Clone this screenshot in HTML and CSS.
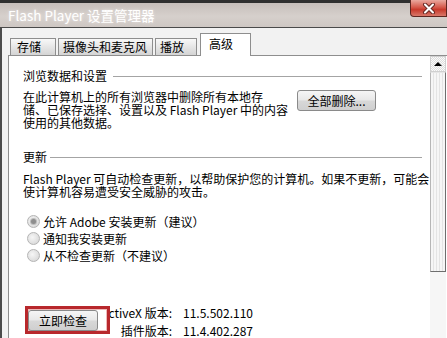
FILE: index.html
```html
<!DOCTYPE html>
<html lang="zh-CN">
<head>
  <meta charset="UTF-8">
  <title>Flash Player 设置管理器</title>
  <link rel="stylesheet" href="styles.css">
</head>
<body>

  <!-- Title bar -->
  <div class="titlebar">
    <span class="title">Flash Player 设置管理器</span>
    <span class="close">
      <svg width="14" height="11" viewBox="0 0 14 11">
        <path d="M3 1.5 L11 9.5 M11 1.5 L3 9.5" stroke="#6a2a24" stroke-width="4" stroke-linecap="round"/>
        <path d="M3 1.5 L11 9.5 M11 1.5 L3 9.5" stroke="#fff" stroke-width="2" stroke-linecap="round"/>
      </svg>
    </span>
  </div>

  <div class="frame">
    <!-- Tabs -->
    <div class="tabs">
      <div class="tab tab-storage">存储</div>
      <div class="tab tab-camera">摄像头和麦克风</div>
      <div class="tab tab-play">播放</div>
      <div class="tab tab-advanced active">高级</div>
    </div>

    <!-- Advanced panel -->
    <div class="panel">
      <div class="content">
        <div class="group-title">浏览数据和设置</div>
        <div class="row">
          <p class="desc desc-delete">在此计算机上的所有浏览器中删除所有本地存<br>储、已保存选择、设置以及 Flash Player 中的内容<br>使用的其他数据。</p>
          <button class="btn btn-delete">全部删除...</button>
        </div>

        <div class="group-title group-update">更新</div>
        <p class="desc desc-update">Flash Player 可自动检查更新，以帮助保护您的计算机。如果不更新，可能会<br>使计算机容易遭受安全威胁的攻击。</p>

        <div class="radios">
          <div class="option"><span class="radio checked"></span>允许 Adobe 安装更新（建议）</div>
          <div class="option"><span class="radio"></span>通知我安装更新</div>
          <div class="option"><span class="radio"></span>从不检查更新（不建议）</div>
        </div>

        <div class="bottom">
          <button class="btn btn-check">立即检查</button>
          <span class="mark"></span>
          <div class="versions">
            <span class="label">ActiveX 版本:</span><span>11.5.502.110</span>
            <span class="label">插件版本:</span><span>11.4.402.287</span>
          </div>
        </div>
      </div>

      <!-- Scrollbar -->
      <div class="scrollbar">
        <div class="sb-up"></div>
        <div class="sb-thumb"></div>
      </div>
    </div>
  </div>

</body>
</html>
```

FILE: styles.css
```css
body {
  margin: 0;
  width: 447px;
  height: 338px;
  overflow: hidden;
  background-color: #f2f2f2;
  font-family: "Noto Sans CJK SC", sans-serif;
  font-size: 12px;
  color: #000;
}
.titlebar {
  display: flex;
  align-items: flex-start;
  height: 24px;
  border-top: 3px solid #2f2f2f;
  border-bottom: 1px solid #4a4a4a;
  background: linear-gradient(to bottom, #c6beba, #d6d0cc 55%, #cec7c3);
}
.title {
  padding-left: 8px;
  line-height: 24px;
  font-size: 13.5px;
  color: #fff;
  text-shadow: 0 0 3px #ece8e6;
}
.close {
  margin-left: auto;
  margin-top: -3px;
  width: 37px;
  height: 17px;
  display: flex;
  align-items: center;
  justify-content: center;
  box-sizing: border-box;
  border: 1px solid #5e2620;
  border-top: none;
  border-radius: 0 0 0 4px;
  background: linear-gradient(to bottom, #eaa89e, #d65a4c 45%, #c83a2c 60%, #d9786a);
}
.frame {
  border-left: 2px solid #4c4c4c;
  height: 310px;
}
.tabs {
  display: flex;
  align-items: flex-end;
  height: 27px;
  padding-left: 8px;
}
.tab {
  position: relative;
  box-sizing: border-box;
  height: 17px;
  margin-right: 2px;
  border: 1px solid #8e8e8e;
  border-bottom: none;
  line-height: 16px;
  background: linear-gradient(to bottom, #f8f8f8, #e2e2e2 60%, #d4d4d4);
}
.tab-storage { width: 46px; padding-left: 6px; }
.tab-camera { width: 95px; padding-left: 4px; }
.tab-play { width: 42px; padding-left: 4px; margin-right: 3px; }
.tab-advanced { width: 51px; padding-left: 8px; }
.tab.active {
  height: 23px;
  margin-bottom: -1px;
  padding-top: 2px;
  background: #fff;
  z-index: 1;
}
.panel {
  display: flex;
  height: 282px;
  margin-left: 6px;
  border-top: 1px solid #8e8e8e;
  border-left: 1px solid #8e8e8e;
  background-color: #fff;
}
.content {
  width: 421px;
  box-sizing: border-box;
  padding: 13px 8px 0 14px;
}
.group-title {
  display: flex;
  align-items: center;
  line-height: 14px;
}
.group-title::after {
  content: "";
  flex: 1;
  height: 1px;
  margin-left: 6px;
  background-color: #a4a4a4;
}
.group-update {
  margin-top: 21px;
}
.group-update::after {
  margin-left: 3px;
}
.row {
  display: flex;
  align-items: flex-start;
  margin-top: 7px;
}
.desc {
  margin: 0;
  line-height: 13px;
  white-space: nowrap;
}
.desc-delete {
  width: 274px;
}
.desc-update {
  margin-top: 8px;
}
.btn {
  box-sizing: border-box;
  padding: 0;
  font-family: inherit;
  font-size: 12px;
  color: #000;
  border: 1px solid #8a8a8a;
  border-radius: 3px;
  background: linear-gradient(to bottom, #f6f6f6, #e8e8e8 48%, #d8d8d8 52%, #cfcfcf);
}
.btn-delete {
  width: 79px;
  height: 21px;
}
.radios {
  margin-top: 15px;
  padding-left: 4px;
}
.option {
  display: flex;
  align-items: center;
  height: 17px;
}
.radio {
  position: relative;
  box-sizing: border-box;
  width: 13px;
  height: 13px;
  margin-right: 3px;
  border: 1px solid #b4b4b4;
  border-radius: 50%;
  background: radial-gradient(circle at 40% 40%, #f6f6f6, #d2d2d2);
}
.radio.checked::after {
  content: "";
  position: absolute;
  left: 3px;
  top: 3px;
  width: 5px;
  height: 5px;
  border-radius: 50%;
  background-color: #8e8e8e;
  box-shadow: 0 0 0 1px #bdbdbd;
}
.bottom {
  position: relative;
  display: flex;
  align-items: flex-start;
  margin-top: 40px;
}
.btn-check {
  position: relative;
  z-index: 2;
  width: 70px;
  height: 21px;
  margin: 6px 0 0 5px;
}
.mark {
  position: absolute;
  left: 2px;
  top: 2px;
  width: 85px;
  height: 28px;
  box-sizing: border-box;
  border: 3px solid #b8282c;
  box-shadow: inset 0 0 0 1px #efb9b9;
  background-color: #fff;
  z-index: 1;
}
.versions {
  display: grid;
  grid-template-columns: 74px auto;
  column-gap: 11px;
  line-height: 18px;
}
.label {
  text-align: right;
}
.scrollbar {
  width: 16px;
  background-color: #f6f6f6;
}
.sb-up {
  position: relative;
  height: 16px;
  box-sizing: border-box;
  border: 1px solid #d0d0d0;
  background: repeating-conic-gradient(#dedede 0 25%, #fbfbfb 0 50%) 0 0 / 2px 2px;
}
.sb-up::after {
  content: "";
  position: absolute;
  left: 3px;
  top: 5px;
  border-left: 4px solid transparent;
  border-right: 4px solid transparent;
  border-bottom: 4px solid #000;
}
.sb-thumb {
  height: 200px;
  box-sizing: border-box;
  border: 1px solid;
  border-color: #e6e6e6 #6e6e6e #6e6e6e #b6b6b6;
  background: repeating-linear-gradient(90deg, #f6f6f6 0 2px, #e4e4e4 2px 3px);
}
```
